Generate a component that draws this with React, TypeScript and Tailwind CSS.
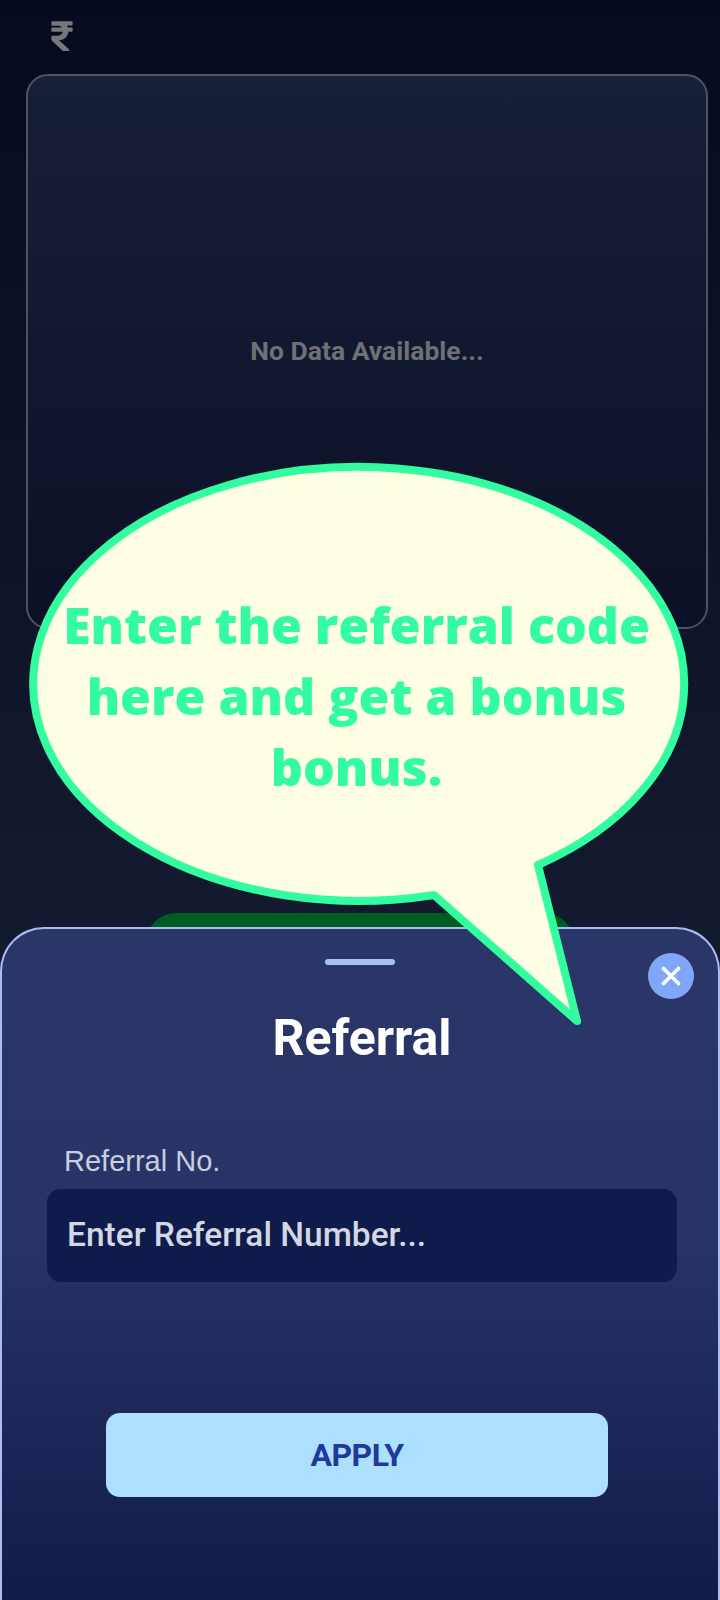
import { X } from "lucide-react";
import { FaRupeeSign } from "react-icons/fa";

export default function App() {
  return (
    <div className="relative h-[1600px] w-[720px] overflow-hidden bg-gradient-to-b from-[#070b1f] to-[#13192e] to-[56%] font-['Roboto',sans-serif]">
      {/* Page behind the sheet */}
      <div className="flex flex-col px-[26px] pt-[19px]">
        <div className="ml-[24px] h-[55px] -translate-x-[5px] text-[#77787d]">
          <FaRupeeSign size={34} />
        </div>
        <div className="flex h-[555px] w-[682px] items-center justify-center rounded-[22px] border-2 border-[#4c5269] bg-gradient-to-b from-[#181f38] to-[#0b1026] pb-[1px]">
          <span className="text-[26.5px] font-bold text-[#6f7076]">No Data Available...</span>
        </div>
        <div className="mt-[284px] ml-[120px] h-[40px] w-[428px] rounded-t-[30px] bg-[#015c22]" />
      </div>

      {/* Bottom sheet */}
      <div className="absolute inset-x-0 top-[927px] bottom-0 rounded-t-[44px] border-2 border-b-0 border-[#a9bdf0] bg-gradient-to-b from-[#2a3668] via-[#283465] via-45% to-[#121c4b]">
        <div className="flex flex-col items-center pt-[30px]">
          <div className="h-[6px] w-[70px] rounded-full bg-[#a9c0f4]" />
          <h1 className="mt-[44px] pl-[4px] text-[50px] leading-[58px] font-bold text-white">Referral</h1>
        </div>
        <button className="absolute top-[24px] right-[24px] flex h-[46px] w-[46px] items-center justify-center rounded-full bg-[#7fa6f9]">
          <X size={30} strokeWidth={3} className="text-white" />
        </button>
        <div className="mt-[76px] px-[45px]">
          <div className="pl-[17px] font-['Liberation_Sans',sans-serif] text-[29px] leading-[36px] text-[#c9cde2]">Referral No.</div>
          <div className="mt-[10px] flex h-[93px] w-[630px] items-center rounded-[14px] bg-[#0f1b4a] pl-[20px] text-[33.5px] font-medium text-[#d3d6e3]">
            Enter Referral Number...
          </div>
          <div className="mt-[131px] ml-[59px] flex h-[84px] w-[502px] items-center justify-center rounded-[14px] bg-[#ade0ff]">
            <span className="text-[32px] font-bold tracking-[-0.5px] text-[#21399a]">APPLY</span>
          </div>
        </div>
      </div>

      {/* Speech bubble */}
      <div className="absolute top-[460px] left-[25px] h-[570px] w-[670px]">
        <svg width="670" height="570" viewBox="0 0 670 570" className="absolute inset-0">
          <path
            d="M409 435 A325.5 217 0 1 1 513 405 L552 561 Z"
            fill="#ffffe4"
            stroke="#33fba0"
            strokeWidth="8"
            strokeLinejoin="round"
          />
        </svg>
        <p className="absolute top-[130px] left-0 w-[663px] text-center font-['Open_Sans',sans-serif] text-[50px] leading-[71px] font-extrabold text-[#33fba4]">
          Enter the referral code
          <br />
          here and get a bonus
          <br />
          bonus.
        </p>
      </div>
    </div>
  );
}
